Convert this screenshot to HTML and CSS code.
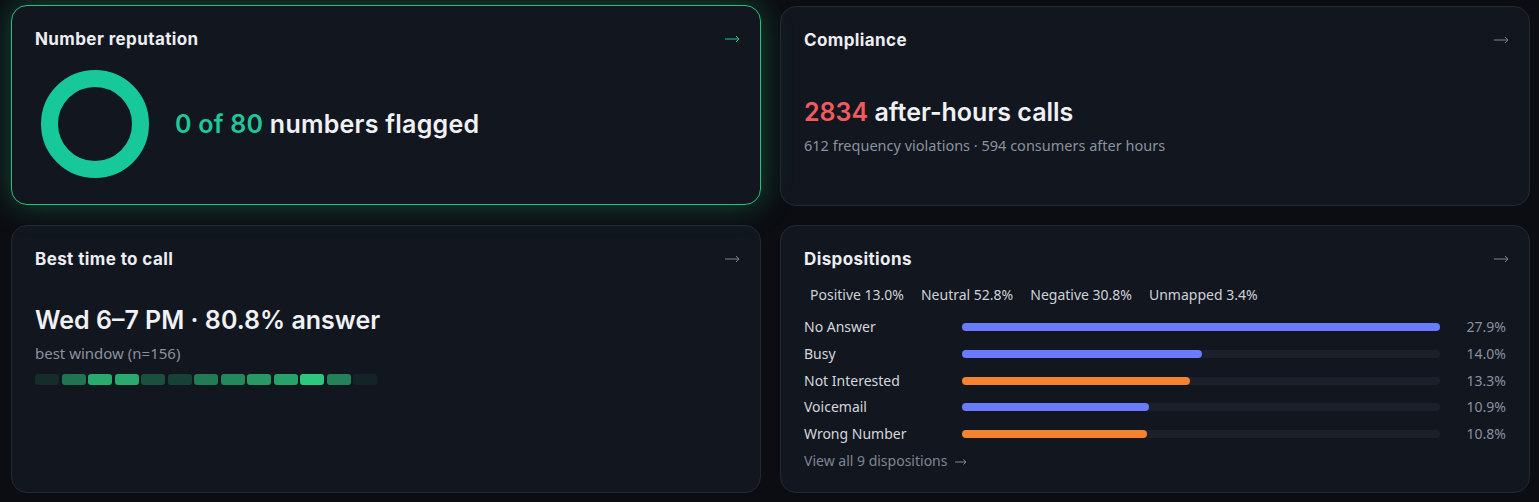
FILE: index.html
```html
<!DOCTYPE html>
<html lang="en">
<head>
    <meta charset="UTF-8">
    <meta name="viewport" content="width=device-width, initial-scale=1.0">
    <title>Calling overview</title>
    <link rel="stylesheet" href="styles.css">
</head>
<body>
    <div class="grid">
        <!-- number reputation -->
        <div class="card card-active">
            <div class="card-head">
                <div class="card-title">Number reputation</div>
                <svg class="arrow" width="16" height="10" viewBox="0 0 16 10"><path d="M1 5H15M12 2L15 5L12 8"/></svg>
            </div>
            <div class="rep-body">
                <svg class="donut" width="108" height="108" viewBox="0 0 108 108">
                    <circle cx="54" cy="54" r="45.5" fill="none" stroke="#17c89a" stroke-width="17"/>
                </svg>
                <div class="big"><span class="green">0 of 80</span> numbers flagged</div>
            </div>
        </div>

        <!-- compliance -->
        <div class="card">
            <div class="card-head">
                <div class="card-title">Compliance</div>
                <svg class="arrow" width="16" height="10" viewBox="0 0 16 10"><path d="M1 5H15M12 2L15 5L12 8"/></svg>
            </div>
            <div class="big comp-big"><span class="red">2834</span> after-hours calls</div>
            <div class="sub comp-sub">612 frequency violations &middot; 594 consumers after hours</div>
        </div>

        <!-- best time -->
        <div class="card">
            <div class="card-head">
                <div class="card-title">Best time to call</div>
                <svg class="arrow" width="16" height="10" viewBox="0 0 16 10"><path d="M1 5H15M12 2L15 5L12 8"/></svg>
            </div>
            <div class="big time-big">Wed 6&ndash;7 PM &middot; 80.8% answer</div>
            <div class="sub time-sub">best window (n=156)</div>
            <div class="heat">
                <span class="cell" style="background: rgba(46, 204, 128, 0.12)"></span>
                <span class="cell" style="background: rgba(46, 204, 128, 0.52)"></span>
                <span class="cell" style="background: rgba(46, 204, 128, 0.82)"></span>
                <span class="cell" style="background: rgba(46, 204, 128, 0.82)"></span>
                <span class="cell" style="background: rgba(46, 204, 128, 0.32)"></span>
                <span class="cell" style="background: rgba(46, 204, 128, 0.24)"></span>
                <span class="cell" style="background: rgba(46, 204, 128, 0.56)"></span>
                <span class="cell" style="background: rgba(46, 204, 128, 0.64)"></span>
                <span class="cell" style="background: rgba(46, 204, 128, 0.72)"></span>
                <span class="cell" style="background: rgba(46, 204, 128, 0.77)"></span>
                <span class="cell" style="background: rgba(46, 204, 128, 0.98)"></span>
                <span class="cell" style="background: rgba(46, 204, 128, 0.60)"></span>
                <span class="cell" style="background: rgba(46, 204, 128, 0.08)"></span>
            </div>
        </div>

        <!-- dispositions -->
        <div class="card">
            <div class="card-head">
                <div class="card-title">Dispositions</div>
                <svg class="arrow" width="16" height="10" viewBox="0 0 16 10"><path d="M1 5H15M12 2L15 5L12 8"/></svg>
            </div>
            <div class="chips">
                <span class="chip">Positive 13.0%</span>
                <span class="chip">Neutral 52.8%</span>
                <span class="chip">Negative 30.8%</span>
                <span class="chip">Unmapped 3.4%</span>
            </div>
            <div class="disp-rows">
                <div class="disp-row">
                    <span class="disp-label">No Answer</span>
                    <div class="track"><div class="fill blue" style="width: 100%"></div></div>
                    <span class="disp-pct">27.9%</span>
                </div>
                <div class="disp-row">
                    <span class="disp-label">Busy</span>
                    <div class="track"><div class="fill blue" style="width: 50.2%"></div></div>
                    <span class="disp-pct">14.0%</span>
                </div>
                <div class="disp-row">
                    <span class="disp-label">Not Interested</span>
                    <div class="track"><div class="fill orange" style="width: 47.7%"></div></div>
                    <span class="disp-pct">13.3%</span>
                </div>
                <div class="disp-row">
                    <span class="disp-label">Voicemail</span>
                    <div class="track"><div class="fill blue" style="width: 39.1%"></div></div>
                    <span class="disp-pct">10.9%</span>
                </div>
                <div class="disp-row">
                    <span class="disp-label">Wrong Number</span>
                    <div class="track"><div class="fill orange" style="width: 38.7%"></div></div>
                    <span class="disp-pct">10.8%</span>
                </div>
            </div>
            <div class="view-all">View all 9 dispositions <svg class="va-arrow" width="13" height="10" viewBox="0 0 13 10"><path d="M1 5H12M9.5 2.5L12 5L9.5 7.5"/></svg></div>
        </div>
    </div>
</body>
</html>
```

FILE: styles.css
```css
body {
    margin: 0;
    background-color: #0b0d12;
    color: #e8eaee;
    font-family: "Noto Sans", "Open Sans", sans-serif;
    font-size: 14px;
}

.grid {
    display: grid;
    grid-template-columns: 1fr 1fr;
    grid-template-rows: 200px 268px;
    gap: 19px;
    padding: 6px 9px 9px 11px;
}

.card {
    background-color: #12161f;
    border: 1px solid #232836;
    border-radius: 16px;
    padding: 23px 23px;
    box-sizing: border-box;
}

.card-active {
    border-color: #2bbd7e;
    transform: translateY(-1px);
    box-shadow: 0 0 30px rgba(38, 190, 120, 0.36);
}

.card-head {
    display: flex;
    justify-content: space-between;
    align-items: center;
    height: 20px;
}

.card-title {
    font-family: Inter, sans-serif;
    font-weight: 700;
    font-size: 17px;
    letter-spacing: 0.4px;
    color: #eceef2;
}

.arrow {
    display: block;
    fill: none;
    stroke: #7d8394;
    stroke-width: 1;
    margin-right: -3px;
}

.card-active .arrow {
    stroke: #2bc383;
}

.big {
    font-family: Inter, sans-serif;
    font-weight: 600;
    font-size: 25px;
    line-height: 32px;
    color: #f0f1f4;
}

.green {
    color: #1cc99b;
}

.red {
    color: #f25a5f;
}

.sub {
    color: #8b919e;
    font-size: 14px;
    line-height: 20px;
    margin-top: 7px;
}

/* number reputation */
.rep-body {
    display: flex;
    align-items: center;
    gap: 26px;
    margin-top: 21px;
    padding-left: 6px;
}

.rep-body .big {
    letter-spacing: 0.25px;
}

.donut {
    display: block;
}

.comp-big {
    margin-top: 46px;
}

.comp-sub {
    font-size: 14.5px;
}

/* best time */
.time-big {
    margin-top: 35px;
}

.time-sub {
    font-size: 15px;
}

.heat {
    display: flex;
    gap: 2.5px;
    margin-top: 11px;
}

.cell {
    width: 24px;
    height: 11px;
    border-radius: 3px;
}

/* dispositions */
.chips {
    display: flex;
    gap: 5px;
    margin-top: 16px;
    line-height: 20px;
    color: #cdd1d8;
}

.chip {
    padding: 0 6px;
}

.disp-rows {
    display: flex;
    flex-direction: column;
    gap: 6.75px;
    margin-top: 12px;
}

.disp-row {
    display: grid;
    grid-template-columns: 150px 1fr 58px;
    column-gap: 8px;
    align-items: center;
    line-height: 20px;
}

.disp-label {
    color: #d3d6dd;
}

.disp-pct {
    color: #8a90a0;
    text-align: right;
}

.track {
    height: 8px;
    border-radius: 4px;
    background-color: #1c202b;
}

.fill {
    height: 100%;
    border-radius: 4px;
}

.blue {
    background-color: #6b7bff;
}

.orange {
    background-color: #f5822f;
}

.view-all {
    color: #7f8593;
    line-height: 20px;
    margin-top: 7px;
}

.va-arrow {
    fill: none;
    stroke: #7f8593;
    stroke-width: 1;
    margin-left: 3px;
    vertical-align: -1px;
}
```
